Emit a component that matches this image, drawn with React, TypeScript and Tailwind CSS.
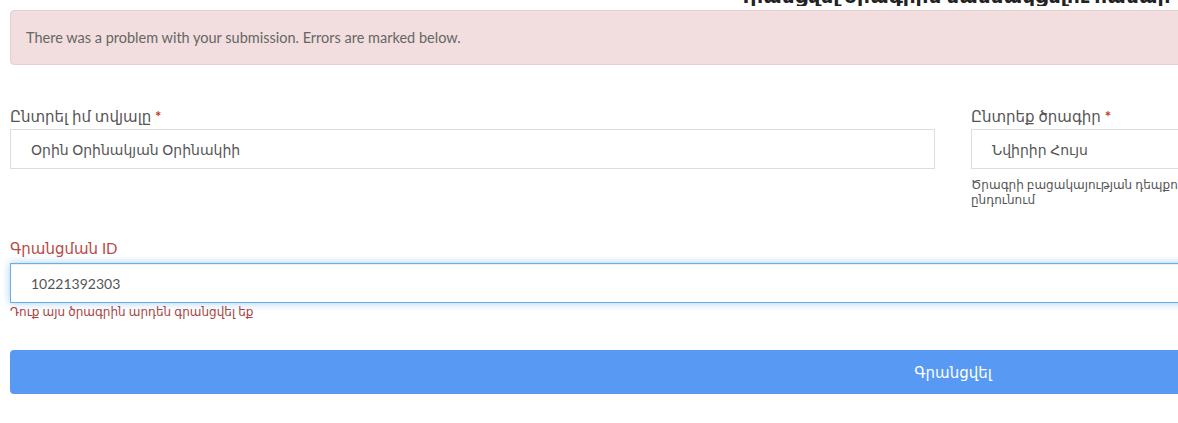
import React from "react";

const font = { fontFamily: 'Lato, "DejaVu Sans", sans-serif' };

export default function App() {
  return (
    <div className="w-full h-[423px] overflow-hidden bg-white" style={font}>
      <div className="w-[1906px] px-[10px]">
        <h2 className="mt-[-19px] h-[25px] text-center text-[20px] leading-[28px] font-bold text-[#222] whitespace-nowrap overflow-hidden">
          Գրանցվել ծրագրին մասնակցելու համար
        </h2>
        <div className="mt-[4px] h-[55px] rounded-[4px] border border-[#ebccd1] bg-[#f2dede] flex items-center px-[15px] text-[14.5px] text-[#666]">
          There was a problem with your submission. Errors are marked below.
        </div>

        <div className="mt-[41px] grid grid-cols-2 gap-x-[36px]">
          <div>
            <label className="block text-[15px] leading-[20px] text-[#555] mb-[3px]">
              Ընտրել իմ տվյալը <span className="text-[#c0392b] font-bold">*</span>
            </label>
            <div className="h-[40px] border border-[#ddd] flex items-center px-[20px] text-[14px] text-[#555]">
              Օրին Օրինակյան Օրինակիի
            </div>
          </div>
          <div>
            <label className="block text-[15px] leading-[20px] text-[#555] mb-[3px]">
              Ընտրեք ծրագիր <span className="text-[#c0392b] font-bold">*</span>
            </label>
            <div className="h-[40px] border border-[#ddd] flex items-center px-[20px] text-[14px] text-[#555]">
              Նվիրիր Հույս
            </div>
            <div className="mt-[8px] text-[12px] leading-[15px] text-[#555]">
              <div className="whitespace-nowrap">
                Ծրագրի բացակայության դեպքում, նշեք ցանկալի ծրագիրը և մենք կկապնվենք Ձեզ հետ
              </div>
              <div>ընդունում</div>
            </div>
          </div>
        </div>

        <div className="mt-[31px]">
          <label className="block text-[15px] leading-[20px] text-[#b94a48] mb-[5px]">
            Գրանցման ID
          </label>
          <div className="h-[40px] border border-[#66afe9] shadow-[inset_0_1px_1px_rgba(0,0,0,0.075),0_0_8px_rgba(102,175,233,0.6)] flex items-center px-[20px] text-[14px] text-[#555]">
            10221392303
          </div>
          <div className="mt-[1px] text-[12px] leading-[15px] text-[#a94442]">
            Դուք այս ծրագրին արդեն գրանցվել եք
          </div>
        </div>

        <button className="mt-[31px] w-full h-[44px] rounded-[4px] bg-[#5899f3] text-white text-[15px] flex items-center justify-center">
          Գրանցվել
        </button>
      </div>
    </div>
  );
}
